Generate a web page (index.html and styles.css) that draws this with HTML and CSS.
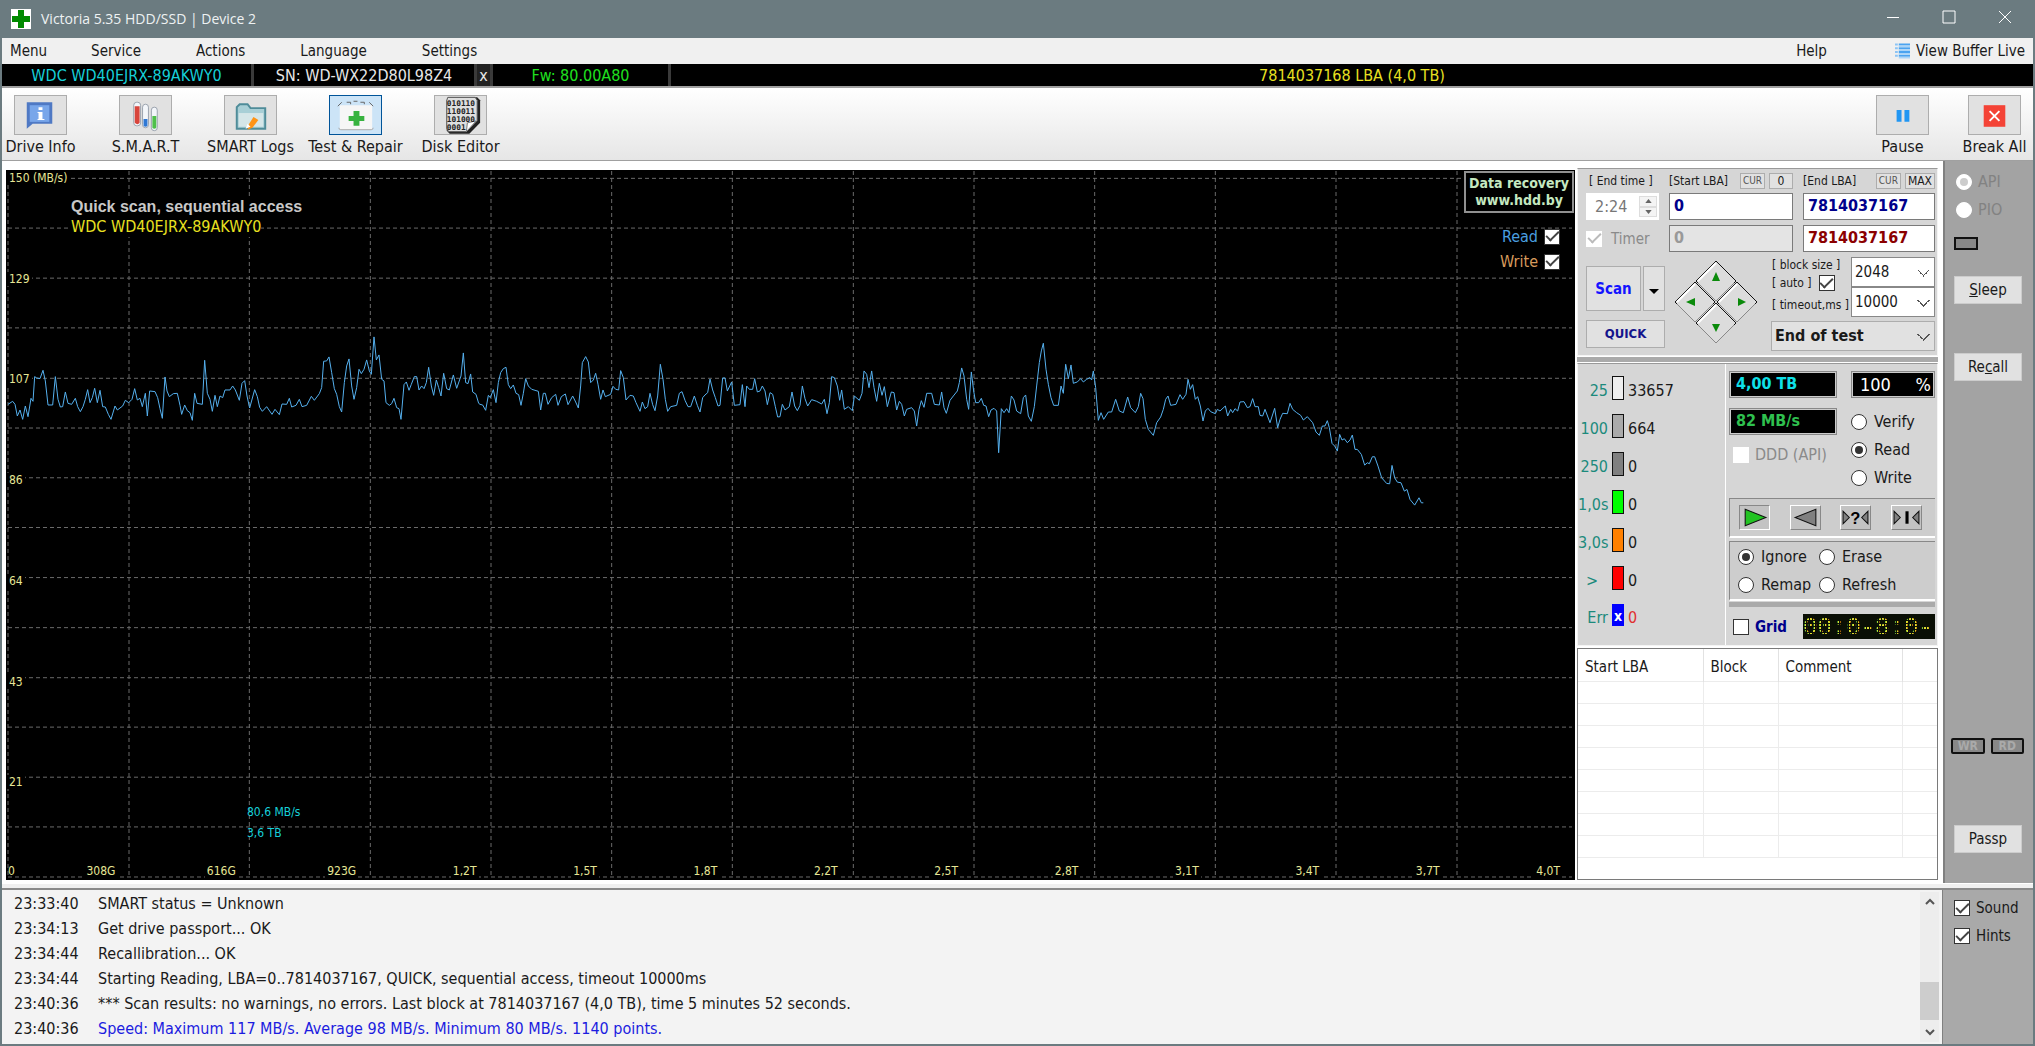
FILE: index.html
```
<!DOCTYPE html>
<html lang="en">
<head>
  <meta charset="utf-8">
  <title>Victoria 5.35 HDD/SSD | Device 2</title>
  <link rel="stylesheet" href="styles.css">
</head>
<body>

  <header class="titlebar">
    <svg class="app-icon" viewBox="0 0 20 20"><rect width="20" height="20" fill="#fff"/><path d="M7 1h6v6h6v6h-6v6H7v-6H1V7h6z" fill="#008a00"/></svg>
    <h1 class="title">Victoria 5.35 HDD/SSD | Device 2</h1>
    <button class="win-btn" aria-label="Minimize"><svg viewBox="0 0 14 14"><path d="M1 7.500h12"/></svg></button>
    <button class="win-btn" aria-label="Maximize"><svg viewBox="0 0 14 14"><path d="M1 1h12v12H1z"/></svg></button>
    <button class="win-btn" aria-label="Close"><svg viewBox="0 0 14 14"><path d="M1 1l12 12M13 1L1 13"/></svg></button>
  </header>

  <nav class="menubar">
    <button class="menu-item">Menu</button>
    <button class="menu-item">Service</button>
    <button class="menu-item">Actions</button>
    <button class="menu-item">Language</button>
    <button class="menu-item">Settings</button>
    <button class="menu-item menu-help">Help</button>
    <button class="menu-item buffer-btn">
      <svg viewBox="0 0 16 16"><path d="M0 1h3M0 5h3M0 9h3M0 13h3" stroke="#8cc4f5" stroke-width="2"/><path d="M4 1h12M4 5h12M4 9h12M4 13h12" stroke="#4aa3f0" stroke-width="2"/><path d="M4 3h12M4 7h12M4 11h12M4 15h12" stroke="#a9d4f8" stroke-width="2"/></svg>
      View Buffer Live
    </button>
  </nav>

  <div class="infobar">
    <div class="info-model">WDC WD40EJRX-89AKWY0</div>
    <div class="info-serial">SN: WD-WX22D80L98Z4</div>
    <button class="info-close">x</button>
    <div class="info-fw">Fw: 80.00A80</div>
    <div class="info-lba">7814037168 LBA (4,0 TB)</div>
  </div>

  <div class="toolbar">
    <button class="tool">
      <span class="tool-box"><svg viewBox="0 0 52 38"><path d="M12 6h26v22H18l-6 5z" fill="#4f79c4"/><path d="M15 9h20v17H15z" fill="#78a6ea"/><path d="M24 11h4v3h-4zM23 16h5v7h2v1h-7v-1h1v-6h-1z" fill="#fff"/></svg></span>
      Drive Info
    </button>
    <button class="tool">
      <span class="tool-box"><svg viewBox="0 0 52 38"><g stroke="#9aa2ad"><rect x="14" y="6" width="7" height="24" rx="3" fill="#f3f6fa"/><rect x="23" y="8" width="6" height="24" rx="3" fill="#f3f6fa"/><rect x="32" y="11" width="6" height="24" rx="3" fill="#f3f6fa"/></g><path d="M15 10h5v17q-2 3-5 0z" fill="#d8453c"/><path d="M24 23h4v7q-2 2-4 0z" fill="#2f78d4"/><path d="M33 20h4v12q-2 2-4 0z" fill="#4fc04a"/></svg></span>
      S.M.A.R.T
    </button>
    <button class="tool">
      <span class="tool-box"><svg viewBox="0 0 52 38"><path d="M12 33V11l3-3h8l3 4h15v21z" fill="#a8cfd6" stroke="#4f8c99" stroke-width="2"/><path d="M14 17h25v14H14z" fill="#d5e6e8"/><path d="M28 20l5 3-6 8-5 2 1-5z" transform="translate(1 1)" fill="#ff9416"/><path d="M21 33l5-2-3-3z" fill="#fff"/></svg></span>
      SMART Logs
    </button>
    <button class="tool tool-active">
      <span class="tool-box"><svg viewBox="0 0 52 38"><path d="M10 9h33v25H10z" fill="#f6f6f6"/><path d="M9 32q0 2 2 2h31q2 0 2-2" fill="none" stroke="#aaa"/><path d="M8 10l4-4M44 10l-4-4M17 6h4v2M24 5h4M35 8V6h-4" fill="none" stroke="#666"/><path d="M24 15h6v5h5v5h-5v5h-6v-5h-5v-5h5z" fill="#37b340"/></svg></span>
      Test &amp; Repair
    </button>
    <button class="tool">
      <span class="tool-box"><svg viewBox="0 0 52 38"><path d="M14 1h29l3 3v23L35 38H15l-3-3V4z" fill="#222"/><path d="M13 1h28l2 3v21L32 36H14l-2-3V4z" fill="#dedede" stroke="#555"/><path d="M32 36l1-9 9-2z" fill="#fff" stroke="#777"/><g class="binary"><text x="12" y="10">010110</text><text x="12" y="18">110011</text><text x="12" y="26">101000</text><text x="12" y="34">0001</text></g></svg></span>
      Disk Editor
    </button>
    <button class="tool tool-right">
      <span class="tool-box"><svg viewBox="0 0 52 38"><path d="M20 14h5v12h-5zM28 14h5v12h-5z" fill="#2196f3"/></svg></span>
      Pause
    </button>
    <button class="tool tool-break">
      <span class="tool-box"><svg viewBox="0 0 52 38"><rect x="15" y="9" width="22" height="22" fill="#f44336"/><path d="M21 15l10 10M31 15L21 25" stroke="#fff" stroke-width="2"/></svg></span>
      Break All
    </button>
  </div>

  <main class="work">
    <section class="chart">
      <svg class="plot" viewBox="18 513 4707 2127" preserveAspectRatio="none">
        <path class="grid-line" d="M24 538H4716M24 687H4716M24 837H4716M24 986H4716M24 1137H4716M24 1286H4716M24 1435H4716M24 1584H4716M24 1734H4716M24 1884H4716M24 2034H4716M24 2182H4716M24 2332H4716M24 2481H4716M24 2631H4716"/>
        <path class="grid-line" d="M24 516V2631M387 516V2631M748 516V2631M1111 516V2631M1473 516V2631M1835 516V2631M2197 516V2631M2560 516V2631M2922 516V2631M3284 516V2631M3646 516V2631M4008 516V2631M4371 516V2631"/>
        <polyline class="speed" transform="translate(0 960)" points="24,255 38,246 45,255 52,290 60,272 68,300 76,260 84,292 93,237 99,246 104,172 110,176 120,178 129,153 136,185 144,257 158,257 166,172 174,240 181,263 188,262 196,218 204,252 215,255 226,237 233,262 241,277 249,262 256,240 263,211 270,250 277,235 284,207 292,250 300,213 308,262 316,263 325,285 333,300 345,260 352,272 368,260 376,243 386,250 396,240 404,208 412,242 420,237 427,262 436,222 442,290 449,215 465,217 473,235 480,268 487,297 495,173 501,215 508,232 520,223 532,222 540,258 545,285 554,257 562,274 570,280 577,303 584,222 591,252 607,255 614,123 622,222 630,240 637,276 645,228 652,262 660,230 668,235 675,212 690,212 698,200 706,212 718,243 726,192 734,184 741,230 749,266 764,211 772,232 779,264 787,276 800,262 816,285 825,270 838,286 846,254 860,255 868,237 875,263 888,258 898,240 906,262 920,258 934,231 943,243 958,223 965,205 971,126 980,125 987,113 995,160 1003,208 1010,225 1018,262 1025,278 1033,190 1040,140 1047,119 1055,200 1062,240 1070,205 1077,150 1084,163 1092,150 1100,122 1108,155 1114,165 1122,53 1129,122 1137,107 1145,180 1152,185 1158,250 1168,258 1175,253 1182,237 1190,265 1197,268 1203,300 1212,196 1219,188 1227,213 1234,195 1243,172 1250,172 1257,212 1265,200 1272,208 1279,190 1286,144 1294,200 1301,228 1309,182 1316,205 1323,230 1331,162 1340,208 1348,212 1360,167 1370,207 1383,170 1390,101 1397,190 1404,193 1412,164 1418,218 1428,225 1436,252 1440,255"/>
        <polyline class="speed" transform="translate(1440 960)" points="0,255 8,257 17,273 25,228 31,235 40,211 48,250 55,190 62,160 70,148 78,144 85,196 92,208 100,197 108,222 116,226 123,258 130,222 137,178 145,200 155,210 175,216 182,272 190,222 196,222 204,255 215,235 227,225 234,258 244,232 256,224 264,256 278,230 287,248 295,266 302,200 307,130 317,112 325,128 332,190 340,182 347,162 354,195 362,240 369,212 376,232 392,225 399,201 407,210 416,212 422,154 430,175 438,242 450,228 460,230 468,250 480,276 487,248 495,268 503,262 510,222 518,256 525,274 533,230 541,135 549,180 556,240 563,276 572,262 590,258 598,222 606,217 615,243 624,262 632,262 643,230 652,258 660,278 668,235 675,227 683,220 690,179 698,212 706,235 714,260 720,258 728,176 735,176 742,215 755,188 763,258 780,256 787,196 795,262 800,200 808,210 818,210 824,178 832,218 840,215 847,200 855,215 862,256 870,220 878,225 886,262 893,293 900,292 907,255 915,272 928,262 936,218 944,260 952,274 960,258 967,200 975,238 983,260 995,241 1010,246 1025,254 1033,240 1041,283 1048,250 1055,172 1063,175 1072,200 1079,243 1085,212 1093,270 1105,262 1117,274 1123,230 1138,243 1146,222 1152,155 1160,165 1167,205 1175,155 1182,205 1190,246 1198,192 1206,228 1213,202 1222,262 1234,218 1242,220 1250,272 1258,246 1265,255 1273,290 1280,270 1295,265 1303,275 1310,320 1317,270 1324,244 1332,264 1340,222 1355,222 1363,255 1378,257 1385,218"/>
        <polyline class="speed" transform="translate(2820 960)" points="5,218 12,265 19,282 30,243 40,230 52,215 58,190 65,146 72,170 80,240 86,270 94,158 101,215 107,250 116,250 124,237 131,258 138,260 146,292 153,272 162,267 170,275 176,400 184,268 192,280 200,268 207,280 214,230 222,242 230,275 242,283 250,235 257,227 265,290 274,306 283,262 290,200 298,130 304,95 310,72 318,150 325,195 333,235 341,258 355,258 363,200 370,222 377,135 385,178 393,137 400,192 412,188 422,178 430,188 440,180 450,175 455,182 460,155 467,205 475,303 483,280 491,300 505,278 515,278 527,240 538,275 550,280 563,233 572,265 586,280 595,262 602,222 609,238 616,300 625,330 640,348 650,310 662,293 670,270 677,240 684,230 692,258 708,255 720,226 728,240 738,225 744,180 751,210 758,196 766,240 773,232 781,260 789,305 796,275 804,267 812,277 826,283 832,270 840,275 856,260 863,290 872,270 878,280 885,268 893,275 900,248 912,247 922,265 930,262 938,238 945,262 955,262 960,288 968,290 975,270 990,310 1004,267 1013,325 1020,300 1028,282 1042,283 1050,252 1058,270 1070,280 1082,288 1090,302 1102,292 1118,310 1128,338 1138,348 1147,320 1155,320 1162,304 1168,325 1176,372 1184,380 1192,395 1199,345 1206,362 1213,358 1222,370 1230,362 1237,347 1245,390 1252,390 1264,405 1274,437 1282,430 1288,433 1297,412 1304,412 1314,440 1325,475 1340,492 1349,493 1356,438 1364,475 1372,488 1383,490 1393,515 1401,510 1410,540 1424,557 1437,535 1444,550 1450,550"/>
      </svg>
      <div class="y-axis">
        <span>150 (MB/s)</span><span>129</span><span>107</span><span>86</span><span>64</span><span>43</span><span>21</span>
      </div>
      <div class="x-axis">
        <span>308G</span><span>616G</span><span>923G</span><span>1,2T</span><span>1,5T</span><span>1,8T</span><span>2,2T</span><span>2,5T</span><span>2,8T</span><span>3,1T</span><span>3,4T</span><span>3,7T</span><span>4,0T</span>
      </div>
      <span class="x-zero">0</span>
      <div class="chart-title">
        <h2>Quick scan, sequential access</h2>
        <p>WDC WD40EJRX-89AKWY0</p>
      </div>
      <div class="cursor-info">
        <p>80,6 MB/s</p>
        <p>3,6 TB</p>
      </div>
      <div class="chart-side">
        <a class="recovery" href="#">Data recovery<br>www.hdd.by</a>
        <label class="legend-read">Read <input type="checkbox" class="check" checked></label>
        <label class="legend-write">Write <input type="checkbox" class="check" checked></label>
      </div>
    </section>

    <section class="controls">
      <div class="panel scan-panel">
        <div class="fields">
          <label class="field-head" for="endTime">[ End time ]</label>
          <div class="field-head"><label for="startLba">[Start LBA]</label><button class="mini dim">CUR</button><button class="mini">0</button></div>
          <div class="field-head"><label for="endLba">[End LBA]</label><button class="mini dim">CUR</button><button class="mini">MAX</button></div>

          <div class="spinner">
            <input type="text" id="endTime" value="2:24" disabled>
            <button aria-label="Up"><svg viewBox="0 0 8 5"><path d="M4 0l4 5H0z"/></svg></button>
            <button aria-label="Down"><svg viewBox="0 0 8 5"><path d="M4 5l4-5H0z"/></svg></button>
          </div>
          <input type="text" class="lba" id="startLba" value="0">
          <input type="text" class="lba" id="endLba" value="7814037167">

          <label class="timer"><input type="checkbox" class="check" checked disabled> Timer</label>
          <input type="text" class="lba lba-cur" value="0" aria-label="Current start" disabled>
          <input type="text" class="lba lba-end" value="7814037167" aria-label="Current end">
        </div>

        <div class="scan-row">
          <div class="scan-buttons">
            <button class="btn scan-btn">Scan</button>
            <button class="btn" aria-label="Scan options"><svg class="caret" viewBox="0 0 10 5"><path d="M0 0h10L5 5z"/></svg></button>
            <button class="btn quick-btn">QUICK</button>
          </div>
          <svg class="dpad" viewBox="0 0 84 84">
            <g stroke="#111" fill="#dcdcdc">
              <path d="M42 1l20 20-20 20-20-20zM21 22l20 20-20 20L1 42zM63 22l20 20-20 20-20-20zM42 43l20 20-20 20-20-20z"/>
            </g>
            <path d="M24 21l18-18M3 42l18-18M45 42l18-18M24 63l18-18" stroke="#fff" stroke-width="2"/>
            <path d="M24 23l18 18 18-18M3 44l18 18 18-18M45 44l18 18 18-18M24 65l18 18 18-18" stroke="#888" fill="none"/>
            <path d="M42 12l4 9h-8zM42 72l4-8h-8zM12 42l9-4v8zM72 42l-8-4v8z" fill="#0a8a0a"/>
          </svg>
          <div class="options">
            <div class="option-labels">
              <label for="blockSize">[ block size ]</label>
              <label>[ auto ] <input type="checkbox" class="check" checked></label>
              <label for="timeout">[ timeout,ms ]</label>
            </div>
            <div class="option-selects">
              <select id="blockSize"><option>2048</option></select>
              <select id="timeout"><option>10000</option></select>
            </div>
            <select class="end-action" aria-label="On finish"><option>End of test</option></select>
          </div>
        </div>
      </div>
      <div class="divider"></div>

      <div class="panel status-panel">
        <ul class="counts">
          <li><span class="limit">25</span><i class="block b25"></i>33657</li>
          <li><span class="limit">100</span><i class="block b100"></i>664</li>
          <li><span class="limit">250</span><i class="block b250"></i>0</li>
          <li><span class="limit">1,0s</span><i class="block b1s"></i>0</li>
          <li><span class="limit">3,0s</span><i class="block b3s"></i>0</li>
          <li><span class="limit limit-over">&gt;</span><i class="block bover"></i>0</li>
          <li class="count-err"><span class="limit">Err</span><i class="block berr">x</i>0</li>
        </ul>

        <div class="progress">
          <div class="readouts">
            <div class="totals">
              <div class="lcd">4,00 TB</div>
              <div class="lcd lcd-speed">82 MB/s</div>
              <label class="ddd"><input type="checkbox" class="check" disabled> DDD (API)</label>
            </div>
            <div class="modes">
              <div class="lcd percent"><span>100</span><span>%</span></div>
              <label><input type="radio" name="mode" class="radio"> Verify</label>
              <label><input type="radio" name="mode" class="radio" checked> Read</label>
              <label><input type="radio" name="mode" class="radio"> Write</label>
            </div>
          </div>

          <div class="inset directions">
            <button class="dir dir-on" aria-label="Forward"><svg viewBox="0 0 28 22"><path d="M5 3l20 8-20 8z" fill="#22c322" stroke="#111"/></svg></button>
            <button class="dir" aria-label="Backward"><svg viewBox="0 0 28 22"><path d="M24 3v16L4 11z" fill="#808080" stroke="#111"/></svg></button>
            <button class="dir" aria-label="Random"><svg viewBox="0 0 28 22"><path d="M2 5v12l6-6zM26 5v12l-6-6z" fill="#808080" stroke="#111"/><text x="9" y="17">?</text></svg></button>
            <button class="dir" aria-label="Butterfly"><svg viewBox="0 0 28 22"><path d="M2 5v12l6-6zM26 5v12l-6-6z" fill="#808080" stroke="#111"/><path d="M13 5h3v12h-3z"/></svg></button>
          </div>

          <div class="inset actions">
            <label><input type="radio" name="action" class="radio" checked> Ignore</label>
            <label><input type="radio" name="action" class="radio"> Erase</label>
            <label><input type="radio" name="action" class="radio"> Remap</label>
            <label><input type="radio" name="action" class="radio"> Refresh</label>
          </div>
          <div class="divider"></div>
          <div class="grid-row">
            <label class="grid-label"><input type="checkbox" class="check"> Grid</label>
            <div class="led">00:0-8:0-</div>
          </div>
        </div>
      </div>

      <div class="defects">
        <table>
          <thead>
            <tr><th class="col-lba">Start LBA</th><th class="col-block">Block</th><th class="col-comment">Comment</th><th></th></tr>
          </thead>
          <tbody>
            <tr><td></td><td></td><td></td><td></td></tr>
            <tr><td></td><td></td><td></td><td></td></tr>
            <tr><td></td><td></td><td></td><td></td></tr>
            <tr><td></td><td></td><td></td><td></td></tr>
            <tr><td></td><td></td><td></td><td></td></tr>
            <tr><td></td><td></td><td></td><td></td></tr>
            <tr><td></td><td></td><td></td><td></td></tr>
            <tr><td></td><td></td><td></td><td></td></tr>
          </tbody>
        </table>
      </div>
    </section>

    <aside class="sidebar">
      <label class="side-radio"><input type="radio" name="access" class="radio" checked disabled> API</label>
      <label class="side-radio"><input type="radio" name="access" class="radio" disabled> PIO</label>
      <div class="lamp"></div>
      <button class="side-btn"><u>S</u>leep</button>
      <button class="side-btn recall">Re<u>c</u>all</button>
      <div class="rw"><span>WR</span><span>RD</span></div>
      <button class="side-btn">Passp</button>
    </aside>
  </main>

  <footer class="bottom">
    <ul class="log">
      <li><time>23:33:40</time>SMART status = Unknown</li>
      <li><time>23:34:13</time>Get drive passport... OK</li>
      <li><time>23:34:44</time>Recallibration... OK</li>
      <li><time>23:34:44</time>Starting Reading, LBA=0..7814037167, QUICK, sequential access, timeout 10000ms</li>
      <li><time>23:40:36</time>*** Scan results: no warnings, no errors. Last block at 7814037167 (4,0 TB), time 5 minutes 52 seconds.</li>
      <li class="log-blue"><time>23:40:36</time>Speed: Maximum 117 MB/s. Average 98 MB/s. Minimum 80 MB/s. 1140 points.</li>
    </ul>
    <div class="scrollbar">
      <svg viewBox="0 0 10 8"><path d="M1 6l4-4 4 4"/></svg>
      <div class="thumb"></div>
      <svg viewBox="0 0 10 8"><path d="M1 2l4 4 4-4"/></svg>
    </div>
    <div class="toggles">
      <label><input type="checkbox" class="check" checked> Sound</label>
      <label><input type="checkbox" class="check" checked> Hints</label>
    </div>
  </footer>

</body>
</html>
```
FILE: styles.css
```
* {
  box-sizing: border-box;
}

body {
  margin: 0;
  height: 100vh;
  display: flex;
  flex-direction: column;
  overflow: hidden;
  font-family: 'DejaVu Sans Condensed', 'DejaVu Sans', sans-serif;
  font-size: 15px;
  line-height: 20px;
  color: #1a1a1a;
  background: #f0f0f0;
  border: 2px solid #6b7b80;
  border-top: 0;
}

button,
input,
select {
  font: inherit;
  color: inherit;
  margin: 0;
  padding: 0;
  border: 0;
  border-radius: 0;
  background: none;
}

h1, h2, p, ul {
  margin: 0;
  padding: 0;
  list-style: none;
}

label {
  white-space: nowrap;
}

/* title bar */
.titlebar {
  display: flex;
  align-items: center;
  height: 38px;
  padding-left: 9px;
  background: #6b7b80;
  color: #eef2f3;
}

.app-icon {
  width: 20px;
  height: 20px;
}

.title {
  flex: 1;
  margin-left: 10px;
  font-family: 'Open Sans', sans-serif;
  font-size: 14px;
  font-weight: normal;
}

.win-btn {
  width: 56px;
  height: 38px;
}

.win-btn svg {
  width: 14px;
  height: 14px;
  fill: none;
  stroke: #fff;
}

/* menu */
.menubar {
  display: flex;
  align-items: center;
  gap: 55px;
  height: 26px;
  padding: 0 8px;
  background: #f0f0f0;
}

.menu-item:first-child {
  margin-right: -11px;
}

.menu-help {
  margin-left: auto;
}

.buffer-btn {
  display: flex;
  align-items: center;
  gap: 6px;
  margin-left: 13px;
}

.buffer-btn svg {
  width: 15px;
  height: 16px;
}

/* drive info */
.infobar {
  display: flex;
  height: 22px;
  font-size: 16px;
  line-height: 24px;
  background: #000;
  text-align: center;
  color: #e8e8e8;
}

.infobar > * {
  border-right: 3px solid #3a3a3a;
}

.info-model {
  width: 252px;
  color: #16cfd8;
}

.info-serial {
  width: 223px;
}

.infobar .info-close {
  width: 16px;
  background: #222;
}

.info-fw {
  width: 178px;
  color: #1fe01f;
}

.infobar .info-lba {
  flex: 1;
  border: 0;
  color: #e8e020;
}

/* toolbar */
.toolbar {
  display: flex;
  align-items: center;
  gap: 52px;
  height: 75px;
  padding: 4px 12px 0;
  border-top: 2px solid #a0a0a0;
  border-bottom: 1px solid #a0a0a0;
  background: linear-gradient(#fff, #e6e6e6);
}

.tool {
  display: flex;
  flex-direction: column;
  align-items: center;
  gap: 2px;
  width: 53px;
  font-size: 16px;
  white-space: nowrap;
}

.tool-box {
  width: 53px;
  height: 40px;
  background: #e1e1e1;
  border: 1px solid #adadad;
}

.tool-box svg {
  display: block;
  width: 100%;
  height: 100%;
}

.tool-active .tool-box {
  background: #cce4f7;
  border: 1px solid #005499;
}

.tool-right {
  margin-left: auto;
}

.tool-break {
  margin-left: -13px;
}

.binary {
  font: bold 8px 'DejaVu Sans Mono', monospace;
  fill: #222;
}

/* work area */
.work {
  flex: 1;
  display: flex;
  min-height: 0;
  background: #fff;
  border-bottom: 1px solid #fff;
}

.chart {
  position: relative;
  flex: 1;
  margin: 9px 2px 3px 4px;
  background: #000;
}

.plot {
  position: absolute;
  width: 100%;
  height: 100%;
}

.grid-line {
  fill: none;
  stroke: #6a6a6a;
  stroke-dasharray: 4 3;
  vector-effect: non-scaling-stroke;
}

.speed {
  fill: none;
  stroke: #55b0ee;
  vector-effect: non-scaling-stroke;
}

.y-axis,
.x-axis,
.x-zero,
.cursor-info {
  position: absolute;
  font-size: 12px;
  line-height: 14px;
  color: #e6e696;
}

.y-axis {
  top: 1px;
  bottom: 4px;
  left: 1px;
  display: grid;
  grid-template-rows: repeat(7, 1fr);
}

.y-axis span,
.x-axis span {
  justify-self: start;
  align-self: start;
  background: #000;
  padding: 0 2px;
}

.x-axis {
  left: 2px;
  right: 2px;
  bottom: 2px;
  display: grid;
  grid-template-columns: repeat(13, 1fr);
}

.x-axis span {
  justify-self: end;
  margin-right: 11px;
}

.x-zero {
  left: 2px;
  bottom: 2px;
}

.chart-title {
  position: absolute;
  top: 27px;
  left: 65px;
  font-size: 16px;
  color: #e8e020;
}

.chart-title h2 {
  font: bold 16px/20px 'Liberation Sans', sans-serif;
  color: #c8c8c8;
}

.chart-title h2,
.chart-title p {
  width: max-content;
  background: #000;
}

.cursor-info {
  left: 241px;
  bottom: 36px;
  line-height: 21px;
  color: #16cfd8;
}

.chart-side {
  position: absolute;
  top: 1px;
  right: 1px;
  display: flex;
  flex-direction: column;
  align-items: flex-end;
}

.recovery {
  padding: 2px 3px;
  margin-bottom: 11px;
  border: 2px solid #909090;
  background: #000;
  color: #c4e8c0;
  font-weight: bold;
  font-size: 14px;
  line-height: 17px;
  text-align: center;
  text-decoration: none;
}

.legend-read,
.legend-write {
  display: flex;
  align-items: center;
  gap: 6px;
  height: 25px;
  margin-right: 14px;
  font-size: 16px;
  color: #4a9fe0;
}

.legend-write {
  color: #d79a5c;
}

/* check boxes and radios */
.check {
  appearance: none;
  flex: none;
  display: inline-grid;
  place-items: center;
  width: 16px;
  height: 16px;
  border: 1px solid #333;
  background: #fff;
}

.check:checked::before {
  content: '';
  width: 11px;
  height: 5px;
  margin-bottom: 4px;
  border: solid #444;
  border-width: 0 0 2px 2px;
  transform: rotate(-45deg);
}

.check:disabled {
  border-color: #fff;
}

.check:disabled::before {
  border-color: #bbb;
}

.radio {
  appearance: none;
  flex: none;
  display: grid;
  place-items: center;
  width: 16px;
  height: 16px;
  border: 1px solid #333;
  border-radius: 50%;
  background: #fff;
}

.radio:checked::before {
  content: '';
  width: 8px;
  height: 8px;
  border-radius: 50%;
  background: #333;
}

.radio:disabled {
  border-color: #fff;
}

.radio:disabled::before {
  background: #ccc;
}

/* control column */
.controls {
  display: flex;
  flex-direction: column;
  width: 361px;
  margin: 7px 5px 3px 0;
}

.panel {
  background: #d6d6d6;
  border: 1px solid #f4f4f4;
  border-top-color: #999;
}

.scan-panel {
  padding: 4px 2px 4px 8px;
}

.divider {
  flex: none;
  height: 5px;
  margin: 1px 0;
  background: #aaa;
}

.fields {
  display: grid;
  grid-template-columns: 73px 124px 1fr;
  gap: 5px 10px;
}

.field-head {
  display: flex;
  align-items: center;
  gap: 4px;
  height: 15px;
  font-size: 12px;
}

.field-head label {
  margin-right: auto;
}

.fields > label.field-head {
  padding-left: 3px;
}

.mini {
  min-width: 24px;
  height: 16px;
  padding: 0 2px;
  border: 1px solid #adadad;
  background: #e1e1e1;
  font-size: 12px;
  line-height: 14px;
}

.mini.dim {
  font-size: 10px;
  color: #555;
}

.spinner {
  display: grid;
  grid-template-columns: 1fr 18px;
  height: 27px;
  padding: 3px 2px;
  background: #fff;
  color: #777;
}

.spinner input {
  grid-row: span 2;
  width: 100%;
  padding-left: 7px;
  font-size: 16px;
}

.spinner button {
  display: grid;
  place-items: center;
  border: 1px solid #ddd;
  background: #f4f4f4;
}

.spinner svg {
  width: 7px;
  height: 4px;
  fill: #666;
}

.lba {
  width: 100%;
  height: 27px;
  padding: 0 4px 2px;
  border: 1px solid #7a7a7a;
  background: #fff;
  font-weight: bold;
  font-size: 16px;
  color: #00008b;
}

.lba-cur {
  background: #e4e4e4;
  color: #999;
}

.lba-end {
  color: #8b0000;
}

.timer,
.ddd {
  display: flex;
  align-items: center;
  gap: 9px;
  color: #8a8a8a;
}

.scan-row {
  display: flex;
  gap: 9px;
  margin-top: 5px;
}

.scan-buttons {
  display: grid;
  grid-template-columns: 55px 22px;
  grid-template-rows: 45px 28px;
  gap: 9px 2px;
  padding-top: 9px;
}

.btn {
  border: 1px solid #adadad;
  background: #e1e1e1;
  font-weight: bold;
}

.scan-btn {
  color: #1414ff;
}

.quick-btn {
  grid-column: span 2;
  font-size: 13px;
  color: #14148c;
}

.caret {
  width: 10px;
  height: 5px;
}

.dpad {
  width: 84px;
  height: 84px;
  margin-top: 3px;
}

.options {
  flex: 1;
  display: grid;
  grid-template-columns: 1fr 84px;
  gap: 4px 2px;
  margin-left: 4px;
}

.option-labels {
  display: grid;
  grid-template-rows: 16px 20px 24px;
  align-items: center;
  font-size: 12px;
  margin-left: 1px;
  margin-right: -4px;
}

.option-labels label {
  display: flex;
  align-items: center;
  gap: 7px;
}

select {
  appearance: none;
  width: 100%;
  height: 30px;
  padding: 0 3px;
  border: 1px solid #888;
  background: linear-gradient(45deg, transparent 50%, #555 50% 60%, transparent 60%) right 10px top 12px / 7px 7px no-repeat,
    linear-gradient(-45deg, transparent 50%, #555 50% 60%, transparent 60%) right 4px top 12px / 7px 7px no-repeat,
    #fff;
}

.end-action {
  grid-column: span 2;
  font-weight: bold;
  font-size: 16px;
  border-color: #adadad;
  background-color: #e1e1e1;
}

/* scan status */
.status-panel {
  display: flex;
}

.counts {
  width: 148px;
  padding-top: 8px;
  border-right: 1px solid #fff;
  font-size: 16px;
}

.counts li {
  display: grid;
  grid-template-columns: 30px 12px 1fr;
  align-items: center;
  gap: 4px;
  height: 38px;
  line-height: 24px;
}

.counts .count-err {
  height: 36px;
  color: #e03030;
}

.limit {
  text-align: right;
  color: #1c8a7c;
}

.limit-over {
  padding-right: 10px;
}

.block {
  width: 12px;
  height: 24px;
  margin-bottom: 6px;
  border: 1px solid #111;
}

.b25 { background: #eee; }
.b100 { background: #aaa; }
.b250 { background: #808080; }
.b1s { background: #0f0; }
.b3s { background: #ff8000; }
.bover { background: #f00; }

.berr {
  height: 22px;
  border: 0;
  background: #00f;
  color: #fff;
  font: bold 14px/24px 'DejaVu Sans Condensed', sans-serif;
  text-align: center;
}

.progress {
  flex: 1;
  padding: 7px 2px 6px 3px;
  font-size: 16px;
}

.readouts {
  display: flex;
  justify-content: space-between;
  padding-bottom: 6px;
}

.totals {
  display: flex;
  flex-direction: column;
  gap: 10px;
  width: 108px;
}

.modes {
  width: 84px;
}

.lcd {
  height: 27px;
  padding: 0 5px;
  border: 2px solid #ccc;
  outline: 1px solid #888;
  outline-offset: -1px;
  background: #000;
  font-weight: bold;
  line-height: 22px;
  color: #0fe0e8;
}

.lcd-speed {
  color: #2fc04f;
}

.percent {
  display: flex;
  justify-content: space-between;
  margin-bottom: 10px;
  padding: 0 2px 0 7px;
  font-size: 18px;
  font-weight: normal;
  line-height: 24px;
  color: #fff;
}

.modes label,
.actions label {
  display: flex;
  align-items: center;
  gap: 7px;
  height: 28px;
}

.ddd {
  padding-left: 4px;
  gap: 6px;
}

.inset {
  border-top: 1px solid #888;
  border-left: 1px solid #888;
  border-bottom: 2px solid #fff;
  background: #cdcdcd;
}

.directions {
  display: flex;
  justify-content: space-between;
  height: 40px;
  padding: 6px 13px 6px 9px;
}

.dir {
  width: 31px;
  height: 25px;
  border: 1px solid #fff;
  border-right-color: #888;
  border-bottom-color: #888;
  background: #c3c3c3;
}

.dir-on {
  border-color: #888 #fff #fff #888;
}

.dir svg {
  display: block;
  width: 100%;
  height: 100%;
}

.dir text {
  font: bold 16px 'Liberation Sans', sans-serif;
}

.actions {
  display: grid;
  grid-template-columns: 81px 1fr;
  margin-top: 3px;
  padding: 1px 8px 0;
}

.grid-row {
  display: flex;
  align-items: center;
  justify-content: space-between;
  padding: 6px 0 0 4px;
}

.grid-label {
  display: flex;
  align-items: center;
  gap: 6px;
  font-size: 15px;
  font-weight: bold;
  color: #00008b;
}

.led {
  position: relative;
  width: 132px;
  height: 25px;
  background: #0a0f05;
  color: #e0e034;
  font: 24px/27px 'Liberation Mono', monospace;
}

/* dot matrix mask over the digits */
.led::after {
  content: '';
  position: absolute;
  inset: 0;
  background:
    repeating-linear-gradient(90deg, #0a0f05 0 1px, transparent 1px 3px),
    repeating-linear-gradient(#0a0f05 0 1px, transparent 1px 3px);
}

/* defects table */
.defects {
  flex: 1;
  margin-top: 2px;
  min-height: 0;
  overflow: hidden;
  border: 1px solid #7a7a7a;
  background: #fff;
}

.defects table {
  width: 100%;
  border-collapse: collapse;
  table-layout: fixed;
}

.defects th {
  height: 32px;
  padding: 4px 7px 0;
  border-right: 1px solid #e2e2e2;
  font-weight: normal;
  text-align: left;
}

.defects td {
  height: 22px;
  padding: 0;
  border: 1px solid #ececec;
  border-left: 0;
}

.col-lba { width: 125px; }
.col-block { width: 75px; }
.col-comment { width: 124px; }

.defects th:last-child,
.defects td:last-child {
  border-right: 0;
}

/* sidebar */
.sidebar {
  display: flex;
  flex-direction: column;
  width: 90px;
  padding: 7px 11px 30px 9px;
  border-left: 2px solid #808080;
  background: #a3a3a3;
}

.side-radio {
  display: flex;
  align-items: center;
  gap: 6px;
  height: 28px;
  font-size: 16px;
  color: #828282;
}

.sidebar .radio {
  margin-left: 2px;
}

.lamp {
  width: 24px;
  height: 13px;
  margin: 13px 0 26px;
  border: 2px solid #111;
  background: #888;
}

.side-btn {
  height: 28px;
  background: #e1e1e1;
  border: 1px solid #ccc;
}

.recall {
  margin-top: 49px;
}

.rw {
  display: flex;
  gap: 6px;
  margin: auto -2px 71px -3px;
}

.rw span {
  flex: 1;
  height: 16px;
  border: 2px solid #111;
  border-radius: 2px;
  background: #888;
  color: #aaa;
  font-size: 12px;
  font-weight: bold;
  line-height: 12px;
  text-align: center;
}

/* log */
.bottom {
  display: flex;
  margin-top: 4px;
  border-top: 2px solid #8a8a8a;
  background: #f3f3f3;
}

.log {
  flex: 1;
  padding: 1px 12px 3px;
  font-size: 16px;
}

.log li {
  line-height: 25px;
}

.log time {
  display: inline-block;
  width: 84px;
}

.log-blue {
  color: #1c1ce0;
}

.log-blue time {
  color: #1a1a1a;
}

.scrollbar {
  display: flex;
  flex-direction: column;
  align-items: center;
  width: 19px;
  margin: 2px 3px 2px 0;
  padding: 6px 0;
  background: #ededed;
}

.scrollbar svg {
  width: 10px;
  height: 8px;
  fill: none;
  stroke: #555;
  stroke-width: 2;
}

.thumb {
  width: 19px;
  height: 38px;
  margin: auto 0 8px;
  background: #cdcdcd;
}

.toggles {
  width: 91px;
  padding: 4px 0 0 11px;
  border-left: 1px solid #808080;
  background: #a9a9a9;
}

.toggles label {
  display: flex;
  align-items: center;
  gap: 6px;
  height: 28px;
}
```
